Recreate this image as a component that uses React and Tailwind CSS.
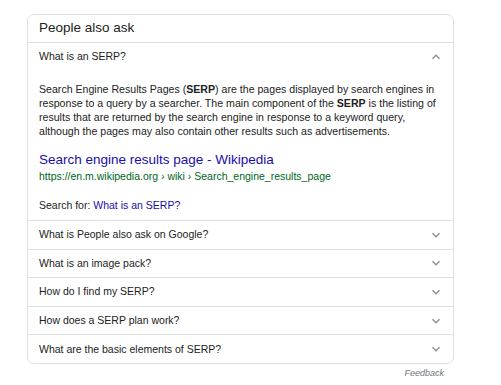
import React from "react";

const questions = [
  "What is People also ask on Google?",
  "What is an image pack?",
  "How do I find my SERP?",
  "How does a SERP plan work?",
  "What are the basic elements of SERP?",
];

function Chevron({ up = false }) {
  return (
    <svg
      viewBox="0 0 24 24"
      className={up ? "w-[16px] h-[16px] rotate-180" : "w-[16px] h-[16px]"}
      fill="#8a8f94"
    >
      <path d="M16.59 8.59L12 13.17 7.41 8.59 6 10l6 6 6-6z" />
    </svg>
  );
}

export default function App() {
  return (
    <div className="w-[501px] h-[385px] bg-white font-['Liberation_Sans',Arial,sans-serif] text-[#222]">
      <div className="pt-[14px] pl-[27px]">
        {/* Card */}
        <div className="w-[427px] border border-[#dfe1e5] rounded-[7px]">
          <div className="h-[28px] flex items-center px-[11px] text-[13.5px] border-b border-[#dfe1e5]">
            People also ask
          </div>

          {/* Expanded question */}
          <div className="h-[28px] flex items-center justify-between pl-[11px] pr-[9px] text-[10.5px]">
            <span>What is an SERP?</span>
            <Chevron up />
          </div>
          <div className="pl-[11px] pr-[4px] pt-[11px] pb-[8px] border-b border-[#dfe1e5]">
            <p className="text-[10.6px] leading-[14px]">
              Search Engine Results Pages (<b>SERP</b>) are the pages displayed by search engines in
              <br />
              response to a query by a searcher. The main component of the <b>SERP</b> is the listing of
              <br />
              results that are returned by the search engine in response to a keyword query,
              <br />
              although the pages may also contain other results such as advertisements.
            </p>
            <div className="mt-[13px] text-[13.5px] leading-[18px] text-[#1a0dab]">
              Search engine results page - Wikipedia
            </div>
            <div className="text-[10.5px] leading-[14px] text-[#006621]">
              https://en.m.wikipedia.org › wiki › Search_engine_results_page
            </div>
            <div className="mt-[15px] text-[10.5px] leading-[14px]">
              Search for: <span className="text-[#1a0dab]">What is an SERP?</span>
            </div>
          </div>

          {/* Collapsed questions */}
          {questions.map((q, i) => (
            <div
              key={q}
              className={
                i < questions.length - 1
                  ? "h-[28.6px] flex items-center justify-between pl-[11px] pr-[9px] text-[10.5px] border-b border-[#dfe1e5]"
                  : "h-[28px] flex items-center justify-between pl-[11px] pr-[9px] text-[10.5px]"
              }
            >
              <span>{q}</span>
              <Chevron />
            </div>
          ))}
        </div>

        <div className="w-[417px] text-right text-[9px] italic text-[#70757a] mt-[3px]">
          Feedback
        </div>
      </div>
    </div>
  );
}
